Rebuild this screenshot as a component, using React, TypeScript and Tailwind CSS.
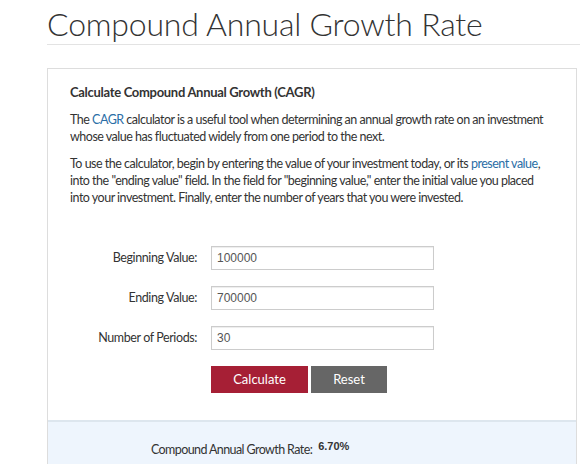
import React from "react";

function Row({ label, value }: { label: string; value: string }) {
  return (
    <div className="flex items-center h-[24px]">
      <div className="w-[127px] text-right text-[12.5px] tracking-[-0.4px] text-[#333]">{label}</div>
      <div className="ml-[14px] w-[223px] h-[24px] border border-[#ccc] shadow-[inset_0_1px_1px_rgba(0,0,0,0.075)] bg-white flex items-center px-[5px] text-[12px] text-[#555] font-['Liberation_Sans',sans-serif]">
        {value}
      </div>
    </div>
  );
}

export default function App() {
  return (
    <div className="w-[580px] h-[464px] bg-white overflow-hidden font-['Lato',sans-serif] text-[#333]">
      <div className="pl-[47px]">
        <h1 className="pt-[6px] text-[32px] leading-[36px] font-light text-[#333] tracking-[-0.2px]">
          Compound Annual Growth Rate
        </h1>
        <div className="mt-[2px] border-t border-[#e3e3e3]" />
        <div className="mt-[23px] w-[530px] border border-[#ddd] border-b-0">
          <div className="px-[22px] pt-[14px] pb-[27px]">
            <h2 className="text-[13px] font-bold leading-[18px] tracking-[-0.3px]">Calculate Compound Annual Growth (CAGR)</h2>
            <div className="text-[12.5px] leading-[17px] tracking-[-0.5px] w-[476px]">
              <p className="mt-[10px]">
                The <span className="text-[#2a6ea6]">CAGR</span> calculator is a useful tool when determining an annual growth rate on an investment whose value has fluctuated widely from one period to the next.
              </p>
              <p className="mt-[10px]">
                To use the calculator, begin by entering the value of your investment today, or its <span className="text-[#2a6ea6]">present value</span>, into the "ending value" field. In the field for "beginning value," enter the initial value you placed into your investment. Finally, enter the number of years that you were invested.
              </p>
            </div>
            <div className="mt-[40px] flex flex-col gap-[16px]">
              <Row label="Beginning Value:" value="100000" />
              <Row label="Ending Value:" value="700000" />
              <Row label="Number of Periods:" value="30" />
            </div>
            <div className="mt-[16px] ml-[141px] flex gap-[3px]">
              <button className="w-[97px] h-[27px] bg-[#a61f35] text-white text-[13px]">Calculate</button>
              <button className="w-[76px] h-[27px] bg-[#666] text-white text-[13px]">Reset</button>
            </div>
          </div>
          <div className="border-t-2 border-[#dde6ee] bg-[#eef5fd] h-[60px] pl-[103px] pt-[19px] flex items-start">
            <span className="text-[12.5px] leading-[17px] tracking-[-0.6px]">Compound Annual Growth Rate:</span>
            <span className="ml-[6px] -mt-[3px] text-[11px] font-bold font-['Liberation_Sans',sans-serif]">6.70%</span>
          </div>
        </div>
      </div>
    </div>
  );
}
